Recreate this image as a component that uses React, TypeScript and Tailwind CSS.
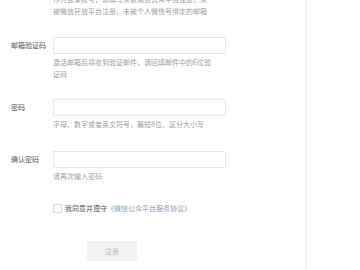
import React from "react";

const font = { fontFamily: '"Noto Sans CJK SC", "Noto Sans", sans-serif' };

function Field({ label, help, mt }: { label: string; help: React.ReactNode; mt: string }) {
  return (
    <div className={`flex ${mt}`}>
      <div className="w-[42px] ml-[11px] h-[17px] flex items-center text-[7px] text-[#555] leading-none whitespace-nowrap">{label}</div>
      <div className="w-[173px]">
        <div className="h-[17px] border border-[#e7e7eb] rounded-[1px] bg-white" />
        <div className="mt-[3px] w-[159px] text-[7px] leading-[11.5px] text-[#a0a0a0]">{help}</div>
      </div>
    </div>
  );
}

export default function App() {
  return (
    <div className="w-[360px] h-[270px] overflow-hidden bg-white flex" style={font}>
      <div className="w-[307px] border-r-[2px] border-[#f5f5f5] shrink-0 h-full">
        <div className="ml-[53px] w-[159px] mt-[-6px] text-[7px] leading-[11.5px] text-[#a0a0a0]">
          作为登录帐号，请填写未被微信公众平台注册，未被微信开放平台注册，未被个人微信号绑定的邮箱
        </div>
        <Field mt="mt-[20px]" label="邮箱验证码" help="激活邮箱后将收到验证邮件，请回填邮件中的6位验证码" />
        <Field mt="mt-[19px]" label="密码" help="字母、数字或者英文符号，最短8位，区分大小写" />
        <Field mt="mt-[20px]" label="确认密码" help="请再次输入密码" />
        <div className="flex items-center ml-[53px] mt-[22px]">
          <div className="w-[9px] h-[9px] border border-[#d9dadc] bg-white" />
          <div className="ml-[3px] text-[7px] leading-none text-[#555] whitespace-nowrap">
            我同意并遵守<span className="text-[#8d9bb0]">《微信公众平台服务协议》</span>
          </div>
        </div>
        <div className="ml-[87px] mt-[28px] w-[50px] h-[20px] bg-[#f2f2f2] rounded-[2px] flex items-center justify-center text-[7px] text-[#b8b8b8]">
          注册
        </div>
      </div>
    </div>
  );
}
